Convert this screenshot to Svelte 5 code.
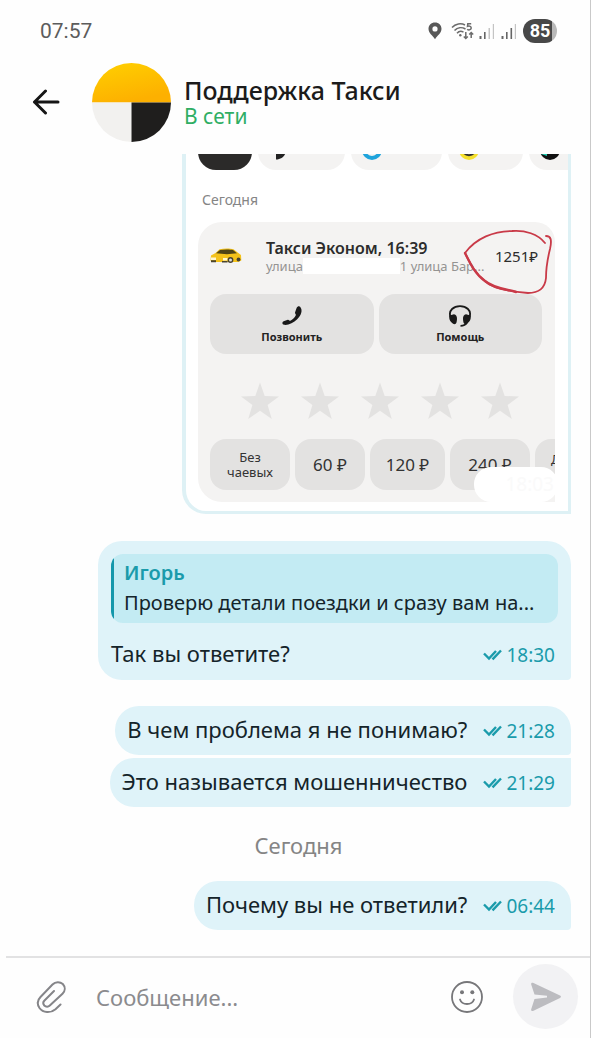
<script>
  const tips = [
    { label: '60 ₽', size: 's' },
    { label: '120 ₽', size: 'm' },
    { label: '240 ₽', size: 'l' },
    { label: 'Др', size: 'l other' }
  ]

  const unread = [
    { text: 'В чем проблема я не понимаю?', time: '21:28', first: true },
    { text: 'Это называется мошенничество', time: '21:29', first: false }
  ]

  const today = [
    { text: 'Почему вы не ответили?', time: '06:44', first: true }
  ]

  let draft = $state('')
</script>

{#snippet stamp(time)}
  <span class="stamp">
    <svg viewBox="0 0 20 12" width="20" height="12" fill="none" stroke="currentColor" stroke-width="2.4">
      <path d="M1 4.5 L6 9.5 L13 2" />
      <path d="M9.5 10.3 L18 1.5" />
    </svg>
    <time>{time}</time>
  </span>
{/snippet}

{#snippet bubble(msg)}
  <div class="bubble line" class:first={msg.first}>
    <span class="text">{msg.text}</span>
    {@render stamp(msg.time)}
  </div>
{/snippet}

<div class="screen">
  <div class="statusbar">
    <span class="clock">07:57</span>
    <div class="indicators">
      <svg class="pin" viewBox="0 0 14 18" width="14" height="18">
        <path fill="#585858" fill-rule="evenodd" d="M7 0.5 C3.2 0.5 0.5 3.2 0.5 6.8 C0.5 11 4.5 13.5 7 17.2 C9.5 13.5 13.5 11 13.5 6.8 C13.5 3.2 10.8 0.5 7 0.5 Z M7 4.3 A2.6 2.6 0 1 1 7 9.5 A2.6 2.6 0 1 1 7 4.3 Z" />
      </svg>
      <svg class="wifi" viewBox="0 0 24 18" width="24" height="18" fill="none" stroke="#6c6c6c" stroke-width="1.5">
        <path d="M1 5.5 C4.5 1.5 10 0.8 14 3" />
        <path d="M3.5 8.5 C6.5 5.2 11 5 14.5 7" />
        <path d="M6 11.3 C8 9 10.5 9 12.5 10.2" />
        <circle cx="9.3" cy="13.2" r="1.2" fill="#6c6c6c" stroke="none" />
        <path d="M20.2 1.8 H16.8 L16.5 4.4 C18.5 3.7 20.4 4.3 20.2 6.2 C20 8.2 17.3 8.3 16.2 7.2" />
        <path d="M14.8 10 V16.5 M12.8 14.4 L14.8 16.5 L16.8 14.4" />
        <path d="M20.2 16 V10.5 M18.2 12.5 L20.2 10.5 L22.2 12.5" />
      </svg>
      <svg class="signal" viewBox="0 0 16 18" width="16" height="18">
        <path fill="#666" d="M0.5 14 h2 v3 h-2z M5 10 h1.6 v7 h-1.6z" />
        <path fill="#c4c4c4" d="M9.5 6 h1.5 v11 h-1.5z M13.8 2 h1.2 v15 h-1.2z" />
      </svg>
      <svg class="signal last" viewBox="0 0 16 18" width="16" height="18">
        <path fill="#666" d="M0.5 14 h2 v3 h-2z M5 10 h1.6 v7 h-1.6z M9.5 6 h1.6 v11 h-1.6z" />
        <path fill="#c4c4c4" d="M13.8 2 h1.2 v15 h-1.2z" />
      </svg>
      <span class="battery">85</span>
    </div>
  </div>

  <header class="top">
    <button class="icon-btn back" type="button" aria-label="Назад">
      <svg viewBox="0 0 28 26" width="28" height="26" fill="none" stroke="#161616" stroke-width="3" stroke-linecap="round" stroke-linejoin="round">
        <path d="M26 13 H2.5 M13.5 2 L2.5 13 L13.5 24" />
      </svg>
    </button>
    <svg class="avatar" viewBox="0 0 80 80" width="79" height="79">
      <defs>
        <linearGradient id="amber" x1="0" y1="0" x2="0.4" y2="1">
          <stop offset="0" stop-color="#ffd000" />
          <stop offset="1" stop-color="#fdb000" />
        </linearGradient>
      </defs>
      <path d="M0 40 A40 40 0 0 1 80 40 Z" fill="url(#amber)" />
      <path d="M0 40 A40 40 0 0 0 40 80 V40 Z" fill="#f2f1ef" />
      <path d="M80 40 A40 40 0 0 1 40 80 V40 Z" fill="#1f1e1d" />
    </svg>
    <div class="who">
      <h1>Поддержка Такси</h1>
      <p>В сети</p>
    </div>
  </header>

  <main class="chat">
    <section class="shot">
      <div class="chips">
        <span class="chip dark"></span>
        <span class="chip w2">
          <svg viewBox="0 0 22 22" width="22" height="22"><path d="M8 2 H18 V11 C18 16 14 20.5 8 20.5 Z" fill="#222" /></svg>
        </span>
        <span class="chip w3">
          <svg viewBox="0 0 22 22" width="22" height="22"><circle cx="11" cy="11" r="8" fill="none" stroke="#1fa4dc" stroke-width="4" /></svg>
        </span>
        <span class="chip w4">
          <svg viewBox="0 0 22 22" width="22" height="22"><circle cx="11" cy="11" r="10" fill="#f5e02c" /><path d="M5 12 C7 17.5 15 17.5 17 12" fill="none" stroke="#333" stroke-width="2" /></svg>
          <span class="chip-text">Еда</span>
        </span>
        <span class="chip w5">
          <svg viewBox="0 0 22 22" width="22" height="22"><circle cx="11" cy="11" r="10" fill="#111" /><path d="M2 15 L5 11 H8 V17 Z" fill="#1fc9b0" /></svg>
        </span>
      </div>
      <div class="shot-date">Сегодня</div>

      <div class="card">
        <div class="trip">
          <svg class="car" viewBox="0 0 32 16" width="32" height="16">
            <path d="M1 7.5 L5.5 5 L9.5 1.3 C14 0.3 20 0.3 23.5 1.3 L28 4.8 L31 7 L31.3 12.5 L28 14 H2 L0.5 12.5 Z" fill="#f4c21a" />
            <path d="M6 5.3 L10 2 C14 1.2 20 1.2 23 2 L27 5.3 L17 6.2 Z" fill="#4f4417" />
            <path d="M1 9.5 H6 V12 H1 Z M13 10 H17.5 V12.5 H13 Z" fill="#fff7cf" />
            <path d="M1 12.3 H6 V14.3 H1 Z M12 13 H17.5 V14.5 H12 Z" fill="#4a4430" />
            <circle cx="20.5" cy="12" r="2.9" fill="#4a4430" />
            <circle cx="20.5" cy="12" r="1.5" fill="#ddd" />
            <circle cx="28.5" cy="11.5" r="1.9" fill="#4a4430" />
          </svg>
          <div class="route">
            <strong>Такси Эконом, 16:39</strong>
            <span class="address">улица<i class="erased"></i>1 улица Бар...</span>
          </div>
          <span class="price">1251₽</span>
        </div>

        <div class="actions">
          <button type="button">
            <svg viewBox="0 0 22 22" width="22" height="22">
              <path d="M15.5 3.2 C16.5 1 18.5 1 19.3 2 C22 5.5 20 10.5 16.2 14.3 C12.5 18 7 20.5 3 19.8 C1 19.3 0.8 17 2.6 16.2 L6.8 14.8 C8 14.6 8.3 16 9.3 15.8 C11.5 14.6 13.7 12.4 14.8 10.2 C15.2 9.2 13.8 8.8 14 7.6 Z" fill="#191919" />
            </svg>
            Позвонить
          </button>
          <button type="button">
            <svg viewBox="0 0 24 22" width="24" height="22">
              <path d="M2.5 12 C0 5 6 1.2 12 1.2 C18 1.2 24 5 21.5 12" fill="none" stroke="#191919" stroke-width="1.8" />
              <path d="M6 9.2 C8 9.5 9.2 11.5 9 14 C8.8 17 8.5 19 6.5 19.3 C2.5 17.8 0.6 14 1.4 10.5 Z M18 9.2 C16 9.5 14.8 11.5 15 14 C15.2 17 15.5 19 17.5 19.3 C21.5 17.8 23.4 14 22.6 10.5 Z" fill="#191919" />
              <path d="M19 17.5 C17.5 20 15 20.8 12.5 20.8" fill="none" stroke="#191919" stroke-width="1.8" />
            </svg>
            Помощь
          </button>
        </div>

        <div class="stars">
          {#each Array(5) as _}
            <svg viewBox="0 0 40 38" width="40" height="38">
              <path d="M20 0.5 L24.7 14 L39 14.4 L27.6 23 L31.8 37 L20 28.8 L8.2 37 L12.4 23 L1 14.4 L15.3 14 Z" fill="#e3e2e1" />
            </svg>
          {/each}
        </div>

        <div class="tips">
          <button class="l none" type="button">Без чаевых</button>
          {#each tips as tip}
            <button class={tip.size} type="button">{tip.label}</button>
          {/each}
        </div>

        <!-- hand-drawn circle round the price -->
        <svg class="scribble" viewBox="0 0 95 75" width="95" height="75" fill="none" stroke="#c93a48" stroke-width="1.8" stroke-linecap="round">
          <path d="M85 18 C78 9 65 5 52 6 C34 6 16 13 5 28 C10 38 15 49 25 56 C33 64 55 67 68 68 C79 68 85 63 86 53 C86 40 88 32 90 24 C92 15 91 11 86 11" />
          <path d="M5 28 C10 38 15 49 25 56 C33 63 45 64 56 67" stroke-width="2.4" />
        </svg>
      </div>
      <span class="shot-time">18:03</span>
    </section>

    <div class="bubble first quoted">
      <blockquote>
        <b>Игорь</b>
        <span>Проверю детали поездки и сразу вам на...</span>
      </blockquote>
      <div class="line">
        <span class="text">Так вы ответите?</span>
        {@render stamp('18:30')}
      </div>
    </div>

    <div class="group">
      {#each unread as msg}
        {@render bubble(msg)}
      {/each}
    </div>

    <div class="day">Сегодня</div>

    <div class="group">
      {#each today as msg}
        {@render bubble(msg)}
      {/each}
    </div>
  </main>

  <form class="composer" onsubmit={(e) => e.preventDefault()}>
    <button class="icon-btn" type="button" aria-label="Прикрепить файл">
      <svg viewBox="0 0 30 34" width="30" height="34" fill="none" stroke="#858589" stroke-width="2" stroke-linecap="round" stroke-linejoin="round">
        <path d="M24.5 24.5 L19.5 29.2 C14.5 33.5 7 33 3.5 28 C0.5 23.5 1.5 20 4.5 17 L16.5 4.5 C19.5 1.5 24 1.5 26.8 4 C29.5 7 29.3 11 26.5 13.7 L13.8 25.6 C12.3 27 9.8 27 8.3 25.5 C7 24 7 22 8.5 20.5 L18 11" />
      </svg>
    </button>
    <input type="text" aria-label="Сообщение" placeholder="Сообщение..." bind:value={draft} />
    <button class="icon-btn" type="button" aria-label="Эмодзи">
      <svg viewBox="0 0 34 34" width="34" height="34" fill="none" stroke="#77777a" stroke-width="1.8" stroke-linecap="round">
        <circle cx="17" cy="17" r="15" />
        <path d="M10 19.5 C12 25.5 22 25.5 24 19.5" />
        <circle cx="12" cy="12.3" r="2" fill="#77777a" stroke="none" />
        <circle cx="22.3" cy="12.3" r="2" fill="#77777a" stroke="none" />
      </svg>
    </button>
    <button class="send" type="submit" aria-label="Отправить">
      <svg viewBox="0 0 32 30" width="32" height="30">
        <path d="M1.2 2.5 C0.8 1 2 0.3 3.5 1 L30 13.6 C31.3 14.3 31.3 15.3 30 16 L3.5 28.8 C2 29.5 0.8 28.8 1.2 27.3 L4.5 17 L17 15.4 V13.8 L4.5 12.5 Z" fill="#bcbcc0" />
      </svg>
    </button>
  </form>
</div>

<style>
  :global(body) { background: #fff; }
  :global(*) { box-sizing: border-box; }

  .screen {
    min-height: 100vh;
    display: flex;
    flex-direction: column;
    background: #fefefe;
    border-right: 1px solid #c9c9c9;
    font-family: "Noto Sans", "Open Sans", sans-serif;
    color: #14242a;
    overflow: hidden;
  }

  button {
    font-family: inherit;
    color: inherit;
    border: none;
    margin: 0;
    padding: 0;
    cursor: pointer;
  }
  svg { display: block; flex-shrink: 0; }

  /* Status bar */
  .statusbar {
    display: flex;
    align-items: center;
    justify-content: space-between;
    height: 62px;
    padding: 0 33px 0 40px;
  }
  .clock {
    font-family: Roboto, sans-serif;
    font-size: 21px;
    color: #5c5c5c;
  }
  .indicators { display: flex; align-items: center; }
  .wifi { margin-left: 9px; }
  .signal { margin-left: 4px; }
  .signal.last { margin-left: 6px; }
  .battery {
    width: 34px;
    height: 24px;
    margin-left: 6px;
    border-radius: 12px;
    background: linear-gradient(90deg, #484848 86%, #b9b9b9 86%);
    color: #fff;
    font-family: Roboto, sans-serif;
    font-size: 18px;
    font-weight: 700;
    line-height: 24px;
    text-align: center;
  }

  /* Chat header */
  .top {
    display: flex;
    align-items: center;
    height: 92px;
    padding: 0 20px 12px 32px;
  }
  .icon-btn { background: none; }
  .avatar { margin-left: 32px; }
  .who { margin-left: 13px; min-width: 0; }
  .who h1 {
    margin: 0;
    font-size: 25px;
    line-height: 28px;
    font-weight: 500;
    color: #1b1b1b;
    white-space: nowrap;
  }
  .who p {
    margin: 0;
    font-size: 21px;
    line-height: 24px;
    color: #2fae64;
  }

  .chat {
    flex: 1;
    display: flex;
    flex-direction: column;
    align-items: flex-end;
    padding: 0 19px 26px;
  }

  /* Shared screenshot */
  .shot {
    position: relative;
    width: 389px;
    max-width: 100%;
    height: 360px;
    padding-left: 12px;
    border: solid #def1f5;
    border-width: 0 3px 3px 4px;
    border-bottom-left-radius: 24px;
    background: #fff;
    overflow: hidden;
  }
  .chips {
    display: flex;
    gap: 6px;
    height: 40px;
    margin-top: -24px;
  }
  .chip {
    display: flex;
    align-items: center;
    flex-shrink: 0;
    gap: 8px;
    padding-left: 10px;
    border-radius: 18px;
    background: #f4f3f2;
  }
  .dark { width: 54px; background: #2b2a29; }
  .w2 { width: 87px; }
  .w3 { width: 91px; }
  .w4 { width: 75px; }
  .w5 { width: 60px; }
  .chip-text {
    padding-bottom: 4px;
    font-size: 12px;
    line-height: 16px;
    color: #555;
  }
  .shot-date {
    margin-top: 20px;
    padding-left: 4px;
    font-size: 14px;
    line-height: 20px;
    color: #858585;
  }

  .card {
    position: relative;
    width: 357px;
    margin-top: 12px;
    padding: 0 13px 12px 12px;
    border-radius: 24px 20px 0 24px;
    background: #f4f3f2;
    overflow: hidden;
  }
  .trip {
    display: flex;
    align-items: center;
    height: 72px;
    padding: 0 4px 4px 0;
  }
  .route {
    display: flex;
    flex-direction: column;
    flex: 1;
    margin-left: 24px;
    white-space: nowrap;
  }
  .route strong {
    font-size: 16px;
    line-height: 20px;
    font-weight: 600;
    color: #2c2c2c;
  }
  .address {
    display: flex;
    align-items: center;
    font-size: 13px;
    line-height: 16px;
    color: #959492;
  }
  .erased {
    width: 97px;
    height: 16px;
    background: #fff;
  }
  .price { font-size: 15px; color: #2c2c2c; }

  .actions {
    display: grid;
    grid-template-columns: 1fr 1fr;
    gap: 5px;
  }
  .actions button {
    display: flex;
    flex-direction: column;
    align-items: center;
    gap: 2px;
    height: 60px;
    padding-top: 11px;
    border-radius: 16px;
    background: #e3e2e1;
    font-size: 11px;
    line-height: 16px;
    font-weight: 700;
    color: #232323;
  }

  .stars {
    display: flex;
    justify-content: center;
    gap: 20px;
    padding: 28px 0 19px 8px;
  }

  .tips {
    display: flex;
    gap: 5px;
  }
  .tips button {
    flex-shrink: 0;
    height: 51px;
    border-radius: 16px;
    background: #e3e2e1;
    font-size: 17px;
    color: #333;
  }
  .tips .s { width: 70px; }
  .tips .m { width: 75px; }
  .tips .l { width: 80px; }
  .tips .none {
    padding: 0 12px;
    font-size: 13px;
    line-height: 15px;
  }
  .tips .other {
    padding: 0 0 12px 16px;
    font-size: 13px;
    text-align: left;
  }

  .scribble {
    position: absolute;
    top: 3px;
    right: 0;
  }
  .shot-time {
    position: absolute;
    right: 10px;
    bottom: 9px;
    width: 84px;
    height: 35px;
    padding-right: 4px;
    border-radius: 17px;
    background: #fff;
    color: #fafafa;
    font-size: 19px;
    line-height: 35px;
    text-align: right;
  }

  /* Messages */
  .bubble {
    border-radius: 24px 0 4px 24px;
    background: #dff3f9;
  }
  .bubble.first { border-top-right-radius: 24px; }
  .line {
    display: flex;
    align-items: center;
    justify-content: space-between;
    gap: 16px;
  }
  .bubble.line {
    height: 49px;
    padding: 0 16px 0 12px;
  }
  .text {
    font-size: 22px;
    line-height: 28px;
    white-space: nowrap;
    padding-bottom: 4px;
  }
  .stamp {
    display: flex;
    align-items: center;
    gap: 3px;
    color: #1a9bab;
    font-size: 19px;
    line-height: 24px;
  }

  .quoted {
    width: 473px;
    max-width: 100%;
    margin-top: 27px;
    padding: 13px 13px 9px;
  }
  .quoted .line { margin-top: 16px; padding-right: 3px; }
  blockquote {
    display: flex;
    flex-direction: column;
    margin: 0;
    padding: 5px 12px 4px 13px;
    border-radius: 12px;
    background: linear-gradient(90deg, #1397ab 3px, #c3ebf3 3px);
    white-space: nowrap;
  }
  blockquote b {
    font-size: 20px;
    line-height: 28px;
    font-weight: 600;
    color: #1a9bab;
  }
  blockquote span {
    font-size: 20px;
    line-height: 32px;
    overflow: hidden;
  }

  .group {
    display: flex;
    flex-direction: column;
    align-items: flex-end;
    gap: 3px;
  }
  .quoted + .group { margin-top: 26px; }

  .day {
    align-self: center;
    height: 74px;
    padding-left: 7px;
    font-size: 22px;
    line-height: 76px;
    color: #858585;
  }

  /* Composer */
  .composer {
    display: flex;
    align-items: center;
    height: 82px;
    margin-left: 6px;
    padding: 0 12px 3px 30px;
    border-top: 2px solid #e2e2e3;
  }
  .composer input {
    flex: 1;
    min-width: 0;
    margin-left: 30px;
    padding: 0;
    border: none;
    outline: none;
    background: none;
    font-family: inherit;
    font-size: 22px;
    color: inherit;
  }
  .composer input::placeholder { color: #8b8b8e; opacity: 1; }
  .send {
    display: flex;
    align-items: center;
    justify-content: center;
    width: 65px;
    height: 65px;
    margin-left: 29px;
    border-radius: 50%;
    background: #f2f2f4;
  }
</style>
